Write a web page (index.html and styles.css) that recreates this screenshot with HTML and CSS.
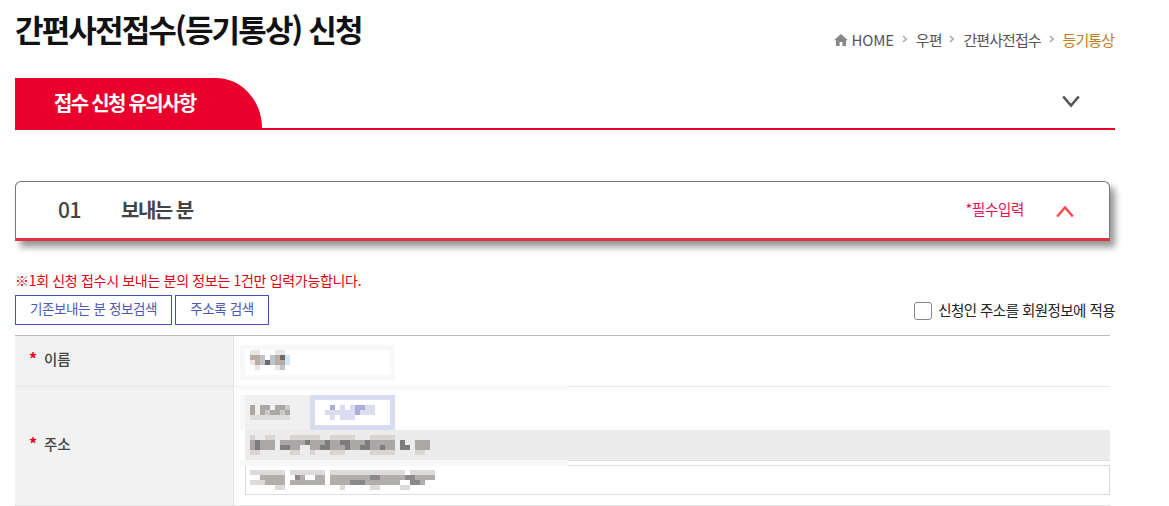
FILE: index.html
```html
<!DOCTYPE html>
<html lang="ko">
<head>
<meta charset="utf-8">
<title>간편사전접수(등기통상) 신청</title>
<link rel="stylesheet" href="styles.css">
</head>
<body>
<main class="page">
  <header class="head">
    <h1 class="title">간편사전접수(등기통상) 신청</h1>
    <nav class="crumbs">
      <svg class="home" viewBox="0 0 14 12" width="14" height="12"><path d="M7 0L0 6.2h2V12h3.6V8h2.8v4H12V6.2h2z" fill="#888"/></svg>
      <span class="crumb-home">HOME</span>
      <svg class="sep" viewBox="0 0 6 8" width="6" height="8"><path d="M1 1l3.2 3L1 7" fill="none" stroke="#aaa" stroke-width="1.6"/></svg>
      <span>우편</span>
      <svg class="sep" viewBox="0 0 6 8" width="6" height="8"><path d="M1 1l3.2 3L1 7" fill="none" stroke="#aaa" stroke-width="1.6"/></svg>
      <span>간편사전접수</span>
      <svg class="sep" viewBox="0 0 6 8" width="6" height="8"><path d="M1 1l3.2 3L1 7" fill="none" stroke="#aaa" stroke-width="1.6"/></svg>
      <span class="crumb-now">등기통상</span>
    </nav>
  </header>

  <section class="notice-tab">
    <h2 class="tab">접수 신청 유의사항</h2>
    <svg class="tab-arrow" viewBox="0 0 18 13" width="18" height="13"><path d="M1.2 1.5L9 10.5l7.8-9" fill="none" stroke="#555" stroke-width="2.6"/></svg>
  </section>

  <section class="step">
    <span class="step-no">01</span>
    <h2 class="step-title">보내는 분</h2>
    <span class="step-req">*필수입력</span>
    <svg class="step-arrow" viewBox="0 0 18 13" width="18" height="13"><path d="M1.2 11.5L9 2.5l7.8 9" fill="none" stroke="#ff4a50" stroke-width="2.6"/></svg>
  </section>

  <p class="warn">※1회 신청 접수시 보내는 분의 정보는 1건만 입력가능합니다.</p>

  <div class="tools">
    <button class="btn btn-wide" type="button">기존보내는 분 정보검색</button>
    <button class="btn btn-addr" type="button">주소록 검색</button>
    <label class="apply"><span class="check"></span><span class="apply-text">신청인 주소를 회원정보에 적용</span></label>
  </div>

  <div class="form">
    <div class="row row-name">
      <div class="label"><i class="star">*</i>이름</div>
      <div class="cell">
        <div class="masked masked-name">
          <svg class="mosaic" viewBox="0 0 8 4" width="40" height="20"><path d="M0 .5h2M5 .5h2M0 2.5h1M5 3.5h1M1 3.5h1" stroke="#ece6e3"/><path d="M0 1.5h2M1 2.5h1M5 2.5h2M5 1.5h1" stroke="#b8aca6"/><path d="M2 1.5h1M4 1.5h1M4 2.5h1M2 2.5h1M6 3.5h1" stroke="#bcc5cc"/><path d="M3 2.5h1M6 1.5h1" stroke="#6c6a6a"/><path d="M7 1.5h1M7 2.5h1" stroke="#d6e6f4"/></svg>
        </div>
      </div>
    </div>
    <div class="row row-addr">
      <div class="label"><i class="star">*</i>주소</div>
      <div class="cell cell-addr">
        <div class="addr-top">
          <div class="masked-zip">
            <svg class="mosaic" viewBox="0 0 8 3" width="40" height="15"><path d="M0 .5h1M2 .5h2M5 .5h2M0 1.5h1M2 1.5h1M4 1.5h2M7 1.5h1" stroke="#aaa7a5"/><path d="M3 1.5h1M6 1.5h1M7 .5h1" stroke="#c8cbce"/><path d="M0 2.5h8" stroke="#dfdddc"/></svg>
          </div>
          <div class="masked-btn">
            <svg class="mosaic" viewBox="0 0 10 3" width="50" height="15"><path d="M1 .5h1M6 .5h2M6 1.5h1" stroke="#aaaedb"/><path d="M3 .5h1M5 .5h1M8 .5h2M0 1.5h6M7 1.5h3M1 2.5h1M3 2.5h3" stroke="#dcdcf0"/></svg>
          </div>
        </div>
        <div class="addr-line addr-base">
          <svg class="mosaic" viewBox="0 0 36 4" width="180" height="20"><path d="M0 .5h1M3 .5h2M8 .5h6M16 .5h5M24 .5h5M0 3.5h2M8 3.5h2M12 3.5h1M16 3.5h3M24 3.5h5M33 3.5h2" stroke="#d8d5d3"/><path d="M0 1.5h1M2 1.5h3M6 1.5h2M8 1.5h3M12 1.5h3M16 1.5h2M20 1.5h3M24 1.5h5M33 1.5h3M0 2.5h1M2 2.5h2M4 2.5h1M8 2.5h2M12 2.5h2M16 2.5h3M20 2.5h2M24 2.5h2M27 2.5h2M33 2.5h3" stroke="#aaa7a6"/><path d="M1 1.5h1M11 1.5h1M15 1.5h1M18 1.5h2M23 1.5h1M1 2.5h1M6 2.5h2M14 2.5h2M19 2.5h1M22 2.5h2M26 2.5h1M30 1.5h1M30 2.5h2" stroke="#7d7c7f"/></svg>
        </div>
        <div class="addr-line addr-detail">
          <svg class="mosaic" viewBox="0 0 38 4" width="190" height="20"><path d="M0 .5h7M8 .5h7M16 .5h15M32 .5h5M0 2.5h3M5 3.5h2M18 3.5h1M24 3.5h2M30 3.5h2" stroke="#dcdada"/><path d="M2 1.5h5M9 1.5h2M13 1.5h2M16 1.5h8M26 1.5h6M33 1.5h4M3 2.5h4M8 2.5h7M16 2.5h14M32 2.5h3" stroke="#b2aeac"/><path d="M9 1.5h1M24 1.5h2M31 1.5h2M32 2.5h2M20 2.5h3" stroke="#8a8a8c"/></svg>
        </div>
      </div>
    </div>
  </div>
</main>
</body>
</html>
```
FILE: styles.css
```css
* { box-sizing: border-box; }
html, body { margin: 0; padding: 0; background: #fff; overflow: hidden; }
body { font-family: "Noto Sans CJK KR", "Noto Sans", sans-serif; color: #333; }
.page { width: 1169px; height: 506px; padding-left: 15px; overflow: hidden; }

.head { display: flex; justify-content: space-between; width: 1100px; height: 78px; }
.title { margin: 7px 0 0; font-size: 31px; line-height: 44px; font-weight: 700; letter-spacing: -1.85px; color: #111; white-space: nowrap; }
.crumbs { display: flex; align-items: center; height: 24px; margin: 27px 1px 0 0; font-size: 15px; letter-spacing: -.95px; color: #555; }
.home { margin-top: 2px; }
.crumb-home { margin-left: 4px; letter-spacing: -.2px; }
.sep { margin: 0 8px 0 8px; }
.crumb-now { color: #bd7f22; }

.notice-tab { display: flex; justify-content: space-between; align-items: center; width: 1100px; height: 52px; border-bottom: 2px solid #e9002c; }
.tab { margin: 0 0 -2px; width: 247px; height: 52px; padding-left: 39px; background: #e9002c; border-top-right-radius: 46px 50px; color: #fff; font-size: 20px; font-weight: 700; line-height: 50px; letter-spacing: -1.7px; white-space: nowrap; }
.tab-arrow { margin: -3px 35px 0 0; }

.step { display: flex; align-items: center; width: 1095px; height: 60px; margin-top: 51px; padding-left: 42px; background: #fff; border: 1px solid #777; border-bottom: 3px solid #e0313c; border-radius: 6px 6px 0 0; box-shadow: 5px 6px 7px rgba(0,0,0,.42); }
.step-no { width: 63px; margin-top: -2px; font-size: 21px; font-weight: 500; letter-spacing: -.5px; color: #444; }
.step-title { margin: -2px 0 0; font-size: 20px; font-weight: 700; letter-spacing: -1.5px; color: #444; }
.step-req { margin: -3px 0 0 auto; font-size: 14.5px; letter-spacing: -.35px; color: #e8114e; }
.step-arrow { margin: 2px 35px 0 32px; }

.warn { margin: 28px 0 0; height: 26px; font-size: 14px; line-height: 22px; letter-spacing: -.32px; color: #e00010; }

.tools { display: flex; align-items: center; width: 1100px; height: 30px; }
.btn { height: 30px; margin: 0 3px 0 0; padding: 0 0 3px; background: #fff; border: 1px solid #3e52b8; font: 13.5px/1 "Noto Sans CJK KR", sans-serif; letter-spacing: -.38px; color: #4a5bb0; }
.btn-wide { width: 157px; }
.btn-addr { width: 94px; }
.apply { display: flex; align-items: center; margin-left: auto; font-size: 14.5px; letter-spacing: -.55px; color: #222; }
.check { width: 18px; height: 18px; margin: 2px 6px 0 0; background: #fff; border: 1px solid #888; border-radius: 3px; }
.apply-text { margin-top: -2px; }

.form { width: 1095px; margin-top: 10px; border-top: 1px solid #bbb; }
.row { display: flex; border-bottom: 1px solid #e6e6e6; }
.row-name { height: 51px; }
.row-addr { height: 119px; }
.label { display: flex; align-items: center; width: 219px; padding: 0 0 6px 14px; background: #f1f1f1; border-right: 1px solid #e6e6e6; font-size: 14.5px; font-weight: 500; color: #444; }
.star { width: 15px; font-style: normal; font-size: 16px; font-weight: 700; color: #e60012; }
.cell { position: relative; flex: 1; }
.masked { width: 155px; height: 35px; margin: 9px 0 0 6px; padding: 5px 0 0 10px; background: #fff; box-shadow: inset 0 0 0 5px #f8f8f8; }
.mosaic { display: block; shape-rendering: crispEdges; }
.cell-addr { display: flex; flex-direction: column; padding: 8px 0 0 6px; }
.cell-addr::before { content: ""; position: absolute; left: 1px; top: -2px; width: 333px; height: 5px; background: #f9f9f9; }
.addr-top { display: flex; height: 35px; }
.masked-zip { width: 70px; padding: 10px 0 0 5px; background: #f0f0f0; border-left: 5px solid #f8f8f8; }
.masked-btn { width: 85px; padding: 10px 0 0 10px; background: #fff; border: 5px solid #d8dcf0; }
.masked-btn .mosaic { margin-top: -5px; }
.addr-line { width: 865px; height: 31px; margin-left: 5px; padding: 5px 0 0 5px; }
.addr-base { background: #ececec; border-bottom: 1px solid #ddd; }
.addr-detail { position: relative; height: 30px; margin-top: 4px; background: #fff; border: 1px solid #ddd; padding: 4px 0 0 4px; }
.addr-detail::before { content: ""; position: absolute; left: -6px; top: -6px; width: 328px; height: 6px; background: #f8f8f8; }
```
